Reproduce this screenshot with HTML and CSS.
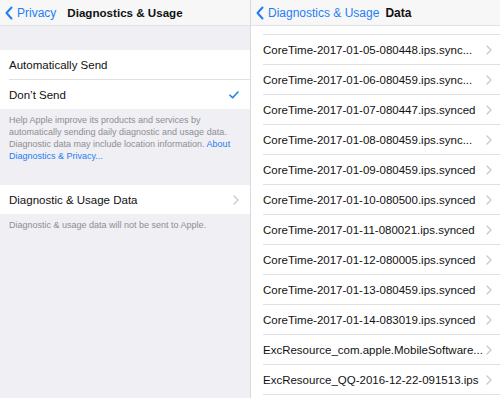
FILE: index.html
```html
<!DOCTYPE html>
<html lang="en">
<head>
    <meta charset="UTF-8">
    <meta name="viewport" content="width=device-width, initial-scale=1.0">
    <title>Diagnostics &amp; Usage</title>
    <link rel="stylesheet" href="styles.css">
</head>
<body>
    <div class="screen">
        <section class="pane pane-left">
            <header class="navbar navbar-center">
                <a class="back" href="#">
                    <svg width="8" height="14" viewBox="0 0 8 14"><polyline points="6.5,1.5 1.5,7 6.5,12.5" fill="none" stroke="#1f7ef3" stroke-width="2" stroke-linecap="round" stroke-linejoin="round"/></svg>
                    <span>Privacy</span>
                </a>
                <h1 class="title">Diagnostics &amp; Usage</h1>
                <div></div>
            </header>

            <ul class="group group-first">
                <li class="cell"><span>Automatically Send</span></li>
                <li class="cell">
                    <span>Don’t Send</span>
                    <svg class="check" width="10" height="8" viewBox="0 0 10 8"><polyline points="1,4.2 3.6,6.8 9,1" fill="none" stroke="#1f7ef3" stroke-width="1.6" stroke-linecap="round" stroke-linejoin="round"/></svg>
                </li>
            </ul>
            <p class="note">Help Apple improve its products and services by automatically sending daily diagnostic and usage data. Diagnostic data may include location information. <a href="#">About</a> <a href="#">Diagnostics &amp; Privacy...</a></p>

            <ul class="group group-second">
                <li class="cell">
                    <span>Diagnostic &amp; Usage Data</span>
                    <svg class="chevron" width="6" height="10" viewBox="0 0 6 10"><polyline points="1,1 5,5 1,9" fill="none" stroke="#c8c8cd" stroke-width="1.3" stroke-linecap="round" stroke-linejoin="round"/></svg>
                </li>
            </ul>
            <p class="note">Diagnostic &amp; usage data will not be sent to Apple.</p>
        </section>

        <section class="pane pane-right">
            <header class="navbar">
                <a class="back" href="#">
                    <svg width="8" height="14" viewBox="0 0 8 14"><polyline points="6.5,1.5 1.5,7 6.5,12.5" fill="none" stroke="#1f7ef3" stroke-width="2" stroke-linecap="round" stroke-linejoin="round"/></svg>
                    <span>Diagnostics &amp; Usage</span>
                </a>
                <h1 class="title">Data</h1>
            </header>

            <ul class="files">
                <li class="file"><span>CoreTime-2017-01-05-080448.ips.sync...</span><svg class="chevron" width="6" height="10" viewBox="0 0 6 10"><polyline points="1,1 5,5 1,9" fill="none" stroke="#c8c8cd" stroke-width="1.3" stroke-linecap="round" stroke-linejoin="round"/></svg></li>
                <li class="file"><span>CoreTime-2017-01-06-080459.ips.sync...</span><svg class="chevron" width="6" height="10" viewBox="0 0 6 10"><polyline points="1,1 5,5 1,9" fill="none" stroke="#c8c8cd" stroke-width="1.3" stroke-linecap="round" stroke-linejoin="round"/></svg></li>
                <li class="file"><span>CoreTime-2017-01-07-080447.ips.synced</span><svg class="chevron" width="6" height="10" viewBox="0 0 6 10"><polyline points="1,1 5,5 1,9" fill="none" stroke="#c8c8cd" stroke-width="1.3" stroke-linecap="round" stroke-linejoin="round"/></svg></li>
                <li class="file"><span>CoreTime-2017-01-08-080459.ips.sync...</span><svg class="chevron" width="6" height="10" viewBox="0 0 6 10"><polyline points="1,1 5,5 1,9" fill="none" stroke="#c8c8cd" stroke-width="1.3" stroke-linecap="round" stroke-linejoin="round"/></svg></li>
                <li class="file"><span>CoreTime-2017-01-09-080459.ips.synced</span><svg class="chevron" width="6" height="10" viewBox="0 0 6 10"><polyline points="1,1 5,5 1,9" fill="none" stroke="#c8c8cd" stroke-width="1.3" stroke-linecap="round" stroke-linejoin="round"/></svg></li>
                <li class="file"><span>CoreTime-2017-01-10-080500.ips.synced</span><svg class="chevron" width="6" height="10" viewBox="0 0 6 10"><polyline points="1,1 5,5 1,9" fill="none" stroke="#c8c8cd" stroke-width="1.3" stroke-linecap="round" stroke-linejoin="round"/></svg></li>
                <li class="file"><span>CoreTime-2017-01-11-080021.ips.synced</span><svg class="chevron" width="6" height="10" viewBox="0 0 6 10"><polyline points="1,1 5,5 1,9" fill="none" stroke="#c8c8cd" stroke-width="1.3" stroke-linecap="round" stroke-linejoin="round"/></svg></li>
                <li class="file"><span>CoreTime-2017-01-12-080005.ips.synced</span><svg class="chevron" width="6" height="10" viewBox="0 0 6 10"><polyline points="1,1 5,5 1,9" fill="none" stroke="#c8c8cd" stroke-width="1.3" stroke-linecap="round" stroke-linejoin="round"/></svg></li>
                <li class="file"><span>CoreTime-2017-01-13-080459.ips.synced</span><svg class="chevron" width="6" height="10" viewBox="0 0 6 10"><polyline points="1,1 5,5 1,9" fill="none" stroke="#c8c8cd" stroke-width="1.3" stroke-linecap="round" stroke-linejoin="round"/></svg></li>
                <li class="file"><span>CoreTime-2017-01-14-083019.ips.synced</span><svg class="chevron" width="6" height="10" viewBox="0 0 6 10"><polyline points="1,1 5,5 1,9" fill="none" stroke="#c8c8cd" stroke-width="1.3" stroke-linecap="round" stroke-linejoin="round"/></svg></li>
                <li class="file"><span>ExcResource_com.apple.MobileSoftware...</span><svg class="chevron" width="6" height="10" viewBox="0 0 6 10"><polyline points="1,1 5,5 1,9" fill="none" stroke="#c8c8cd" stroke-width="1.3" stroke-linecap="round" stroke-linejoin="round"/></svg></li>
                <li class="file"><span>ExcResource_QQ-2016-12-22-091513.ips</span><svg class="chevron" width="6" height="10" viewBox="0 0 6 10"><polyline points="1,1 5,5 1,9" fill="none" stroke="#c8c8cd" stroke-width="1.3" stroke-linecap="round" stroke-linejoin="round"/></svg></li>
            </ul>
        </section>
    </div>
</body>
</html>
```

FILE: styles.css
```css
html, body {
    margin: 0;
    padding: 0;
}
body {
    width: 500px;
    height: 398px;
    overflow: hidden;
    font-family: "Liberation Sans", Arial, sans-serif;
    color: #111;
    -webkit-font-smoothing: antialiased;
}
ul {
    list-style: none;
    margin: 0;
    padding: 0;
}
a {
    color: #1f7ef3;
    text-decoration: none;
}
.screen {
    display: flex;
    height: 398px;
}
.pane {
    height: 100%;
    overflow: hidden;
}
.pane-left {
    width: 250px;
    background-color: #efeff4;
    border-right: 1px solid #d9d9de;
}
.pane-right {
    flex: 1;
    background-color: #fff;
}

/* nav bar */
.navbar {
    height: 25px;
    display: flex;
    align-items: center;
    background-color: #f7f7f8;
    border-bottom: 1px solid #e2e2e6;
    padding-left: 5px;
}
.navbar-center {
    display: grid;
    grid-template-columns: 1fr auto 1fr;
    padding: 0 5px;
}
.back {
    display: flex;
    align-items: center;
    gap: 4px;
    font-size: 12px;
}
.title {
    margin: 0 0 0 6px;
    font-size: 12px;
    font-weight: bold;
}
.navbar-center .title {
    margin: 0;
    font-size: 11.6px;
}

/* settings groups */
.group {
    background-color: #fff;
    padding-left: 9px;
}
.group-first {
    margin-top: 24px;
}
.group-second {
    margin-top: 23px;
}
.cell {
    height: 29px;
    display: flex;
    align-items: center;
    justify-content: space-between;
    padding-right: 11px;
    font-size: 11.5px;
}
.cell + .cell {
    border-top: 1px solid #e0e0e4;
}
.note {
    margin: 0;
    padding: 5px 9px 0 9px;
    font-size: 9px;
    line-height: 12px;
    color: #8e8e93;
}
.note a {
    color: #1f7ef3;
}

/* file list */
.files {
    margin: 8px 0 0 12px;
    border-top: 1px solid #e0e0e4;
}
.file {
    height: 29px;
    display: flex;
    align-items: center;
    justify-content: space-between;
    padding-right: 8px;
    border-bottom: 1px solid #e0e0e4;
    font-size: 11.5px;
    white-space: nowrap;
}
```
